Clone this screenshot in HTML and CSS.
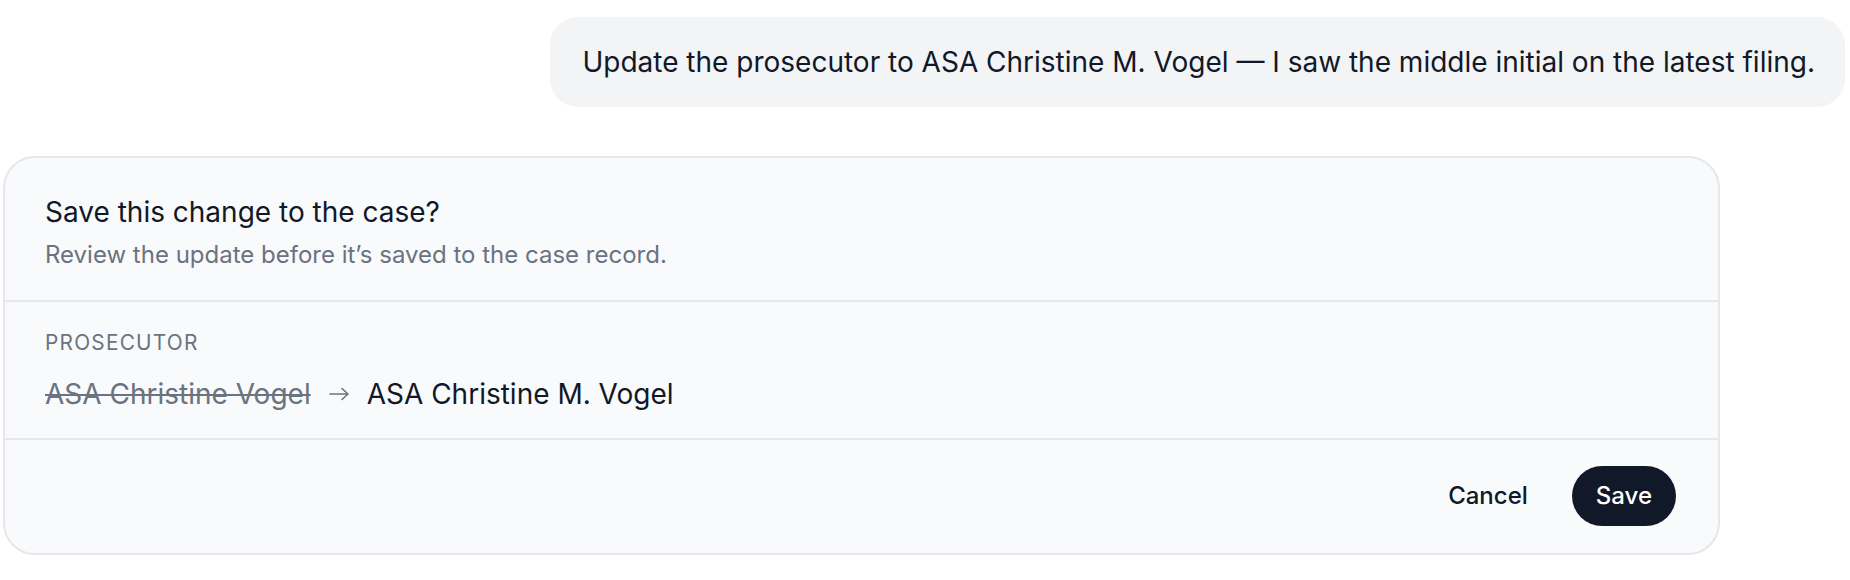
FILE: index.html
```html
<!DOCTYPE html>
<html lang="en">
<head>
    <meta charset="UTF-8">
    <meta name="viewport" content="width=device-width, initial-scale=1.0">
    <title>Confirm case update</title>
    <link rel="stylesheet" href="styles.css">
</head>
<body>

<div class="thread">
    <!-- User message -->
    <div class="bubble">Update the prosecutor to ASA Christine M. Vogel — I saw the middle initial on the latest filing.</div>

    <!-- Confirmation card -->
    <div class="card">
        <div class="card-header">
            <div class="card-title">Save this change to the case?</div>
            <div class="card-subtitle">Review the update before it’s saved to the case record.</div>
        </div>

        <div class="card-field">
            <div class="field-label">Prosecutor</div>
            <div class="field-change">
                <span class="old-value">ASA Christine Vogel</span>
                <svg class="arrow" width="20" height="14" viewBox="0 0 20 14" fill="none" stroke="#6b7280" stroke-width="1.6" stroke-linecap="round" stroke-linejoin="round">
                    <path d="M1 7h18M13 1.5L19 7l-6 5.5"/>
                </svg>
                <span class="new-value">ASA Christine M. Vogel</span>
            </div>
        </div>

        <div class="card-footer">
            <button class="button ghost">Cancel</button>
            <button class="button dark">Save</button>
        </div>
    </div>
</div>

</body>
</html>
```

FILE: styles.css
```css
* {
    box-sizing: border-box;
}
body {
    margin: 0;
    padding: 17px 5px 0 3px;
    background-color: #fff;
    font-family: Inter, "Noto Sans", sans-serif;
    color: #111827;
}
.thread {
    display: flex;
    flex-direction: column;
}
.bubble {
    align-self: flex-end;
    background-color: #f3f4f6;
    border-radius: 28px;
    padding: 24px 30px 24px 32px;
    font-size: 28px;
    line-height: 1.5;
}
.card {
    width: 1717px;
    margin-top: 49px;
    background-color: #f9fafb;
    border: 2px solid #e5e7eb;
    border-radius: 32px;
}
.card-header {
    padding: 32.5px 40px 27px;
    border-bottom: 2px solid #e5e7eb;
}
.card-title {
    font-size: 28px;
    line-height: 1.5;
}
.card-subtitle {
    margin-top: 4px;
    font-size: 24px;
    line-height: 1.5;
    color: #6b7280;
}
.card-field {
    padding: 25.5px 40px 22.5px;
    border-bottom: 2px solid #e5e7eb;
}
.field-label {
    font-size: 20.8px;
    line-height: 1.5;
    letter-spacing: 0.06em;
    text-transform: uppercase;
    color: #6b7280;
}
.field-change {
    display: flex;
    align-items: center;
    gap: 18px;
    margin-top: 15px;
    font-size: 28px;
    line-height: 42px;
}
.old-value {
    color: #6b7280;
    text-decoration: line-through;
}
.arrow {
    flex-shrink: 0;
}
.card-footer {
    display: flex;
    justify-content: flex-end;
    gap: 20px;
    padding: 26px 42px 27.5px 40px;
}
.button {
    font-family: inherit;
    font-size: 24px;
    line-height: 1.5;
    font-weight: 500;
    padding: 12px 24px;
    border: none;
    border-radius: 999px;
    cursor: pointer;
}
.button.ghost {
    background-color: transparent;
    color: #111827;
}
.button.dark {
    background-color: #111827;
    color: #fff;
}
```
